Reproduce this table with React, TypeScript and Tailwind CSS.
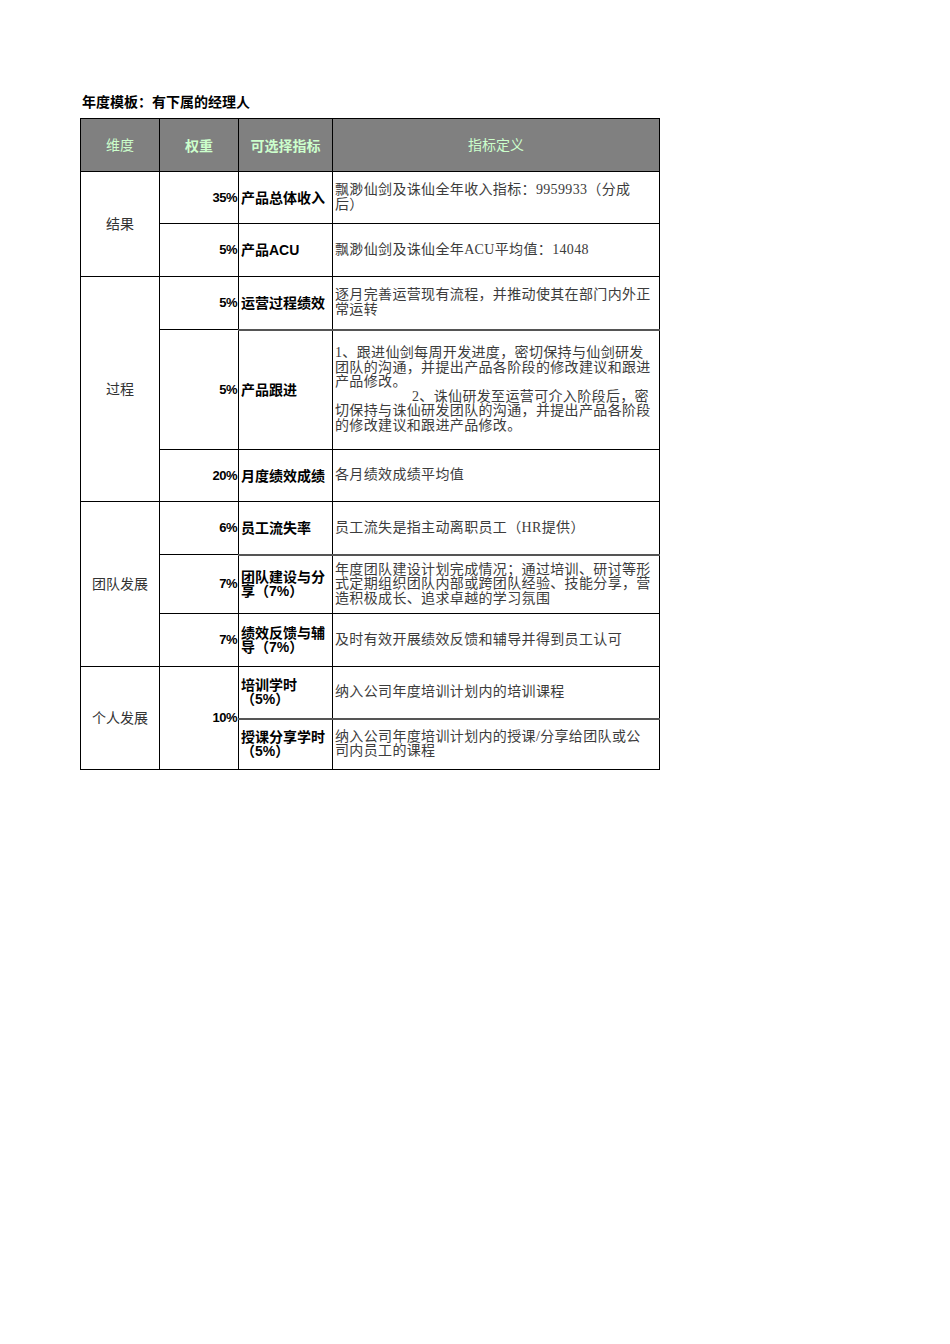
import React from "react";

type Row = {
  dim?: { text: string; span: number };
  weight?: { text: string; span: number };
  metric: string[];
  def: React.ReactNode;
  h: string;
  bTop?: string;
};

const L = ({ children, pl }: { children: React.ReactNode; pl?: boolean }) => (
  <div className={pl ? "whitespace-nowrap pl-[77px]" : "whitespace-nowrap"}>{children}</div>
);

const thick = "border-t-2 border-t-[#555555]";

const rows: Row[] = [
  {
    dim: { text: "结果", span: 2 },
    weight: { text: "35%", span: 1 },
    metric: ["产品总体收入"],
    def: (
      <>
        <L>飘渺仙剑及诛仙全年收入指标：9959933（分成</L>
        <L>后）</L>
      </>
    ),
    h: "h-[52px]",
  },
  {
    weight: { text: "5%", span: 1 },
    metric: ["产品ACU"],
    def: <L>飘渺仙剑及诛仙全年ACU平均值：14048</L>,
    h: "h-[53px]",
  },
  {
    dim: { text: "过程", span: 3 },
    weight: { text: "5%", span: 1 },
    metric: ["运营过程绩效"],
    def: (
      <>
        <L>逐月完善运营现有流程，并推动使其在部门内外正</L>
        <L>常运转</L>
      </>
    ),
    h: "h-[53px]",
  },
  {
    weight: { text: "5%", span: 1 },
    metric: ["产品跟进"],
    def: (
      <>
        <L>1、跟进仙剑每周开发进度，密切保持与仙剑研发</L>
        <L>团队的沟通，并提出产品各阶段的修改建议和跟进</L>
        <L>产品修改。</L>
        <L pl>2、诛仙研发至运营可介入阶段后，密</L>
        <L>切保持与诛仙研发团队的沟通，并提出产品各阶段</L>
        <L>的修改建议和跟进产品修改。</L>
      </>
    ),
    h: "h-[120px]",
    bTop: thick,
  },
  {
    weight: { text: "20%", span: 1 },
    metric: ["月度绩效成绩"],
    def: <L>各月绩效成绩平均值</L>,
    h: "h-[52px]",
  },
  {
    dim: { text: "团队发展", span: 3 },
    weight: { text: "6%", span: 1 },
    metric: ["员工流失率"],
    def: <L>员工流失是指主动离职员工（HR提供）</L>,
    h: "h-[53px]",
  },
  {
    weight: { text: "7%", span: 1 },
    metric: ["团队建设与分", "享（7%）"],
    def: (
      <>
        <L>年度团队建设计划完成情况；通过培训、研讨等形</L>
        <L>式定期组织团队内部或跨团队经验、技能分享，营</L>
        <L>造积极成长、追求卓越的学习氛围</L>
      </>
    ),
    h: "h-[59px]",
    bTop: thick,
  },
  {
    weight: { text: "7%", span: 1 },
    metric: ["绩效反馈与辅", "导（7%）"],
    def: <L>及时有效开展绩效反馈和辅导并得到员工认可</L>,
    h: "h-[53px]",
  },
  {
    dim: { text: "个人发展", span: 2 },
    weight: { text: "10%", span: 2 },
    metric: ["培训学时", "（5%）"],
    def: <L>纳入公司年度培训计划内的培训课程</L>,
    h: "h-[52px]",
  },
  {
    metric: ["授课分享学时", "（5%）"],
    def: (
      <>
        <L>纳入公司年度培训计划内的授课/分享给团队或公</L>
        <L>司内员工的课程</L>
      </>
    ),
    h: "h-[51px]",
    bTop: thick,
  },
];

export default function App() {
  return (
    <div className="min-h-[1344px] w-[950px] bg-white pl-[80px] pt-[93px]">
      <div className="pl-[2px] font-['Liberation_Sans','Noto_Sans_CJK_SC',sans-serif] text-[14px] font-bold leading-[18px] text-black">
        年度模板：有下属的经理人
      </div>
      <table className="mt-[7px] table-fixed border-collapse border border-black">
        <colgroup>
          <col className="w-[79px]" />
          <col className="w-[79px]" />
          <col className="w-[94px]" />
          <col className="w-[327px]" />
        </colgroup>
        <thead>
          <tr className="h-[53px] bg-[#808080] text-[14px] text-[#ccffcc]">
            <th className="border border-black font-['Liberation_Serif','Noto_Sans_CJK_SC',serif] font-normal">
              维度
            </th>
            <th className="border border-black font-['Noto_Sans_CJK_SC',sans-serif] font-bold">
              权重
            </th>
            <th className="border border-black font-['Noto_Sans_CJK_SC',sans-serif] font-bold">
              可选择指标
            </th>
            <th className="border border-black font-['Liberation_Serif','Noto_Sans_CJK_SC',serif] font-normal">
              指标定义
            </th>
          </tr>
        </thead>
        <tbody>
          {rows.map((r, i) => (
            <tr key={i} className={r.h}>
              {r.dim && (
                <td
                  rowSpan={r.dim.span}
                  className="border border-black text-center align-middle font-['Liberation_Serif','Noto_Sans_CJK_SC',serif] text-[14px] text-[#333333]"
                >
                  {r.dim.text}
                </td>
              )}
              {r.weight && (
                <td
                  rowSpan={r.weight.span}
                  className="border border-black pr-[1px] text-right align-middle font-['Liberation_Sans',sans-serif] text-[13px] font-bold tracking-[-0.5px] text-black"
                >
                  {r.weight.text}
                </td>
              )}
              <td
                className={`border border-black pl-[2px] align-middle font-['Liberation_Sans','Noto_Sans_CJK_SC',sans-serif] text-[14px] font-bold leading-[14px] text-black ${r.bTop ?? ""}`}
              >
                {r.metric.map((m, j) => (
                  <div key={j} className="whitespace-nowrap">
                    {m}
                  </div>
                ))}
              </td>
              <td
                className={`border border-black pl-[2px] align-middle font-['Liberation_Serif','Noto_Sans_CJK_SC',serif] text-[14px] leading-[14.5px] tracking-[0.35px] text-[#3c3c3c] ${r.bTop ?? ""}`}
              >
                {r.def}
              </td>
            </tr>
          ))}
        </tbody>
      </table>
    </div>
  );
}
